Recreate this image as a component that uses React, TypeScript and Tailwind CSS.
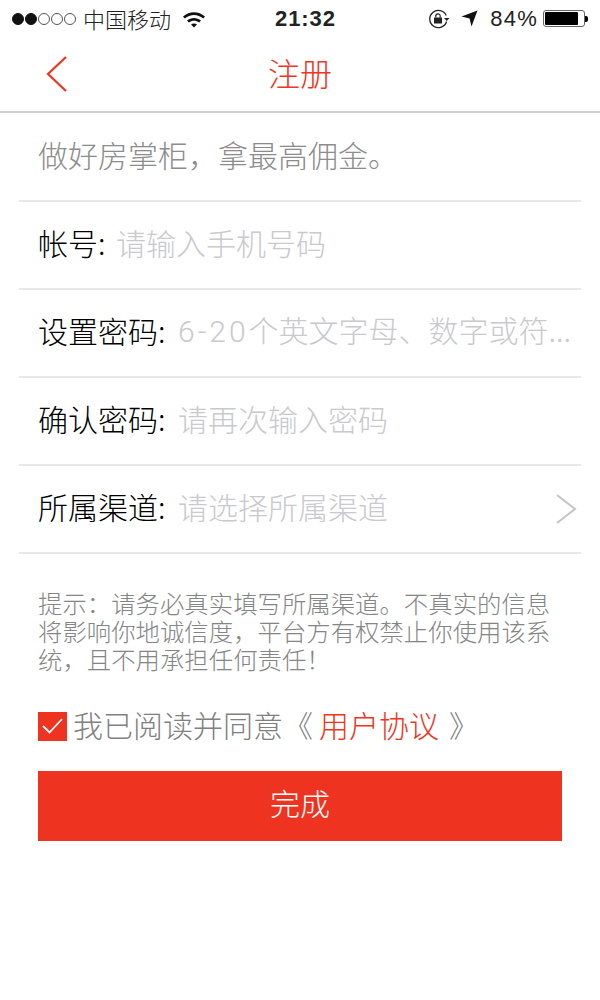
import React from "react";

const cjk = "font-['Noto_Sans_CJK_SC','Noto_Sans',sans-serif]";
const latin = "font-['Liberation_Sans',sans-serif]";

function Dots() {
  return (
    <div className="flex items-center gap-[1px]">
      {[0, 1, 2, 3, 4].map((i) => (
        <span
          key={i}
          className={`block w-[12px] h-[12px] rounded-full border ${i < 2 ? "bg-[#111] border-[#111]" : "bg-white border-[#555]"}`}
        />
      ))}
    </div>
  );
}

function StatusBar() {
  return (
    <div className={`relative flex items-center h-[37px] pl-[12px] pr-[12px] text-[#222] ${cjk}`}>
      <Dots />
      <span className="ml-[7px] text-[22px] leading-[37px] font-light">中国移动</span>
      <svg className="ml-[11px]" width="24" height="18" viewBox="0 0 24 18">
        <path d="M1 6.5C7.5 .8 16.5 .8 23 6.5l-1.8 2C15.8 3.8 8.2 3.8 2.8 8.5z" fill="#111" />
        <path d="M5 10.6c4.2-3.6 9.8-3.6 14 0l-1.9 2c-3.2-2.6-7-2.6-10.2 0z" fill="#111" />
        <path d="M9 14.6c1.9-1.5 4.1-1.5 6 0L12 17.6z" fill="#111" />
      </svg>
      <span className={`absolute left-[275px] top-0 leading-[37px] text-[22px] font-bold tracking-[0.9px] ${latin}`}>
        21:32
      </span>
      <div className="ml-auto flex items-center">
        <svg width="22" height="20" viewBox="0 0 22 20">
          <path d="M18.2 6.5A8.6 8.6 0 1 0 18.6 12.5" fill="none" stroke="#222" strokeWidth="1.3" />
          <path d="M16 9h5.5l-2.7 3z" fill="#222" />
          <rect x="6" y="8.5" width="8" height="6" fill="#222" />
          <path d="M7.8 8.5V7a2.2 2.2 0 0 1 4.4 0v1.5" fill="none" stroke="#222" strokeWidth="1.2" />
        </svg>
        <svg className="ml-[11px]" width="17" height="17" viewBox="0 0 17 17">
          <path d="M16.5 .5 10.5 16.5 8.6 8.4 .5 6.6z" fill="#111" />
        </svg>
        <span className={`ml-[12px] text-[22px] leading-[37px] tracking-[1.2px] ${latin}`}>84%</span>
        <div className="ml-[5px] flex items-center">
          <div className="w-[42px] h-[17px] border border-[#666] rounded-[3px] p-[1px] bg-white">
            <div className="h-full w-[33px] bg-black rounded-[1px]" />
          </div>
          <div className="w-[3px] h-[6px] bg-black rounded-r-[2px]" />
        </div>
      </div>
    </div>
  );
}

function Row({ label, labelWidth, children, arrow }: { label: string; labelWidth: string; children: React.ReactNode; arrow?: boolean }) {
  return (
    <div className="flex items-center h-[88px] border-b-2 border-[#e8e8e8] pl-[19px] pr-[4px]">
      <span className={`pb-[5px] text-[30px] font-light text-black whitespace-nowrap ${labelWidth}`}>{label}:</span>
      <span className="pb-[5px] text-[30px] font-light text-[#c9c9ce] whitespace-nowrap">{children}</span>
      {arrow && (
        <svg className="ml-auto" width="22" height="32" viewBox="0 0 22 32">
          <path d="M2 2 20 16 2 30" fill="none" stroke="#c4c4c4" strokeWidth="2" />
        </svg>
      )}
    </div>
  );
}

export default function App() {
  return (
    <div className={`w-[600px] h-[1000px] bg-white overflow-hidden ${cjk}`}>
      <StatusBar />
      <div className="relative flex items-center justify-center h-[76px] border-b-2 border-[#cfcfcf]">
        <svg className="absolute left-[45px] top-[18px]" width="24" height="38" viewBox="0 0 24 38">
          <path d="M21 2 3 19l18 17" fill="none" stroke="#f0351c" strokeWidth="2.2" />
        </svg>
        <span className="pb-[4px] text-[32px] font-light text-[#f0351c]">注册</span>
      </div>

      <div className="mx-[19px]">
        <div className="flex items-center h-[89px] border-b-2 border-[#e8e8e8] pl-[19px] pb-[4px] text-[30px] font-light text-[#8c8c8c] whitespace-nowrap">
          做好房掌柜，拿最高佣金。
        </div>
        <Row label="帐号" labelWidth="w-[78px]">请输入手机号码</Row>
        <Row label="设置密码" labelWidth="w-[140px]">
          <span className="font-['Roboto',sans-serif] tracking-[3px]">6-20</span>个英文字母、数字或符...
        </Row>
        <Row label="确认密码" labelWidth="w-[140px]">请再次输入密码</Row>
        <Row label="所属渠道" labelWidth="w-[140px]" arrow>
          请选择所属渠道
        </Row>
      </div>

      <div className="mx-[38px] mt-[35px] text-[24.4px] font-light leading-[28px] text-[#858585] w-[530px]">
        <p>提示：请务必真实填写所属渠道。不真实的信息</p>
        <p>将影响你地诚信度，平台方有权禁止你使用该系</p>
        <p>统，且不用承担任何责任！</p>
      </div>

      <div className="flex items-center mx-[38px] mt-[31px] h-[44px] text-[30px] font-light text-[#808080] whitespace-nowrap">
        <span className="flex items-center justify-center w-[29px] h-[29px] bg-[#ee3420]">
          <svg width="23" height="18" viewBox="0 0 23 18">
            <path d="M2 9l6.5 6.5L21 2" fill="none" stroke="white" strokeWidth="1.8" />
          </svg>
        </span>
        <span className="ml-[6px] pb-[4px]">我已阅读并同意</span>
        <span className="pb-[4px]">《</span>
        <span className="ml-[6px] pb-[4px] text-[#f0351c]">用户协议</span>
        <span className="ml-[10px] pb-[4px]">》</span>
      </div>

      <button className="block mx-[38px] mt-[23px] w-[524px] h-[70px] bg-[#ee3420] text-white text-[30px] font-light">
        <span className="relative -top-[4px]">完成</span>
      </button>
    </div>
  );
}
